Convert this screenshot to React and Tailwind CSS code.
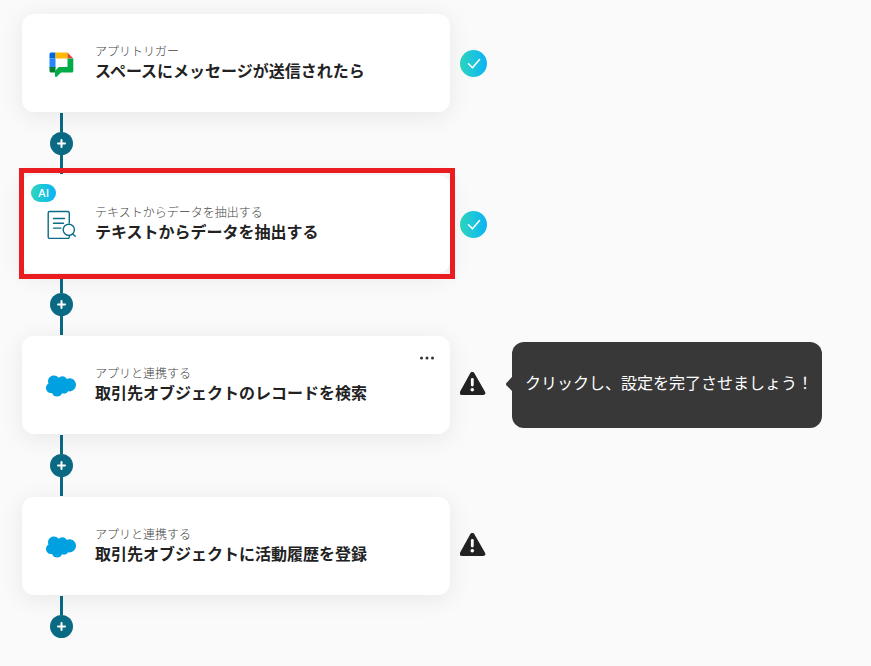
import React from 'react';
import clsx from 'clsx';

const steps = [
  { id: 1, icon: 'chat', label: 'アプリトリガー', title: 'スペースにメッセージが送信されたら', status: 'done' },
  { id: 2, icon: 'extract', label: 'テキストからデータを抽出する', title: 'テキストからデータを抽出する', status: 'done', ai: true, highlighted: true },
  { id: 3, icon: 'salesforce', label: 'アプリと連携する', title: '取引先オブジェクトのレコードを検索', status: 'warning', menu: true, hint: 'クリックし、設定を完了させましょう！' },
  { id: 4, icon: 'salesforce', label: 'アプリと連携する', title: '取引先オブジェクトに活動履歴を登録', status: 'warning' },
];

const ChatIcon = () => (
  <svg viewBox="0 0 30 30" className="size-[30px]" aria-hidden="true">
    <path d="M5 4.500h4.500v6h-6V6A1.500 1.500 0 0 1 5 4.500Z" fill="#0066DA" />
    <path d="M3.500 10.500h6V20h-6Z" fill="#2684FC" />
    <path d="M9.500 4.500h12v6h-12Z" fill="#FFBA00" />
    <path d="M21.500 4.500l5.800 6h-5.800Z" fill="#EA4335" />
    <path d="M3.500 19h6v5.500H5A1.500 1.500 0 0 1 3.500 23Z" fill="#00832D" />
    <path d="M21.500 10.500h5.800V23a1.500 1.500 0 0 1-1.500 1.500H15l-4 4c-.8.8-2 .4-2-.8V23l3.800-4h8.700Z" fill="#00AC47" />
  </svg>
);

const ExtractIcon = () => (
  <svg viewBox="0 0 30 30" className="size-[30px]" fill="none" stroke="#0B6C87" strokeWidth="1.400" strokeLinecap="round" aria-hidden="true">
    <path d="M23.300 14V4A1.500 1.500 0 0 0 21.800 2.500H3.700A1.500 1.500 0 0 0 2.200 4v24a1.500 1.500 0 0 0 1.500 1.500h18.100a1.500 1.500 0 0 0 1.500-1.500v-1.500" />
    <path d="M7.500 9.500h11M7.500 14.300h10M7.500 19.100h7.500" />
    <circle cx="22.800" cy="20.800" r="5.600" />
    <path d="M26.800 24.900l2.400 2.400" />
  </svg>
);

const SalesforceIcon = () => (
  <svg viewBox="0 -0.800 24 24" className="size-[30px]" fill="#00A1E0" aria-hidden="true">
    <path d="M10.006 5.415a4.195 4.195 0 0 1 3.045-1.306c1.560 0 2.954.9 3.690 2.205.63-.3 1.350-.45 2.100-.45 2.850 0 5.159 2.340 5.159 5.220s-2.310 5.220-5.176 5.220c-.345 0-.69-.044-1.020-.104a3.750 3.750 0 0 1-3.300 1.950c-.6 0-1.155-.15-1.650-.375A4.314 4.314 0 0 1 8.880 20.400a4.302 4.302 0 0 1-4.050-2.820c-.27.062-.54.076-.825.076-2.204 0-4.005-1.800-4.005-4.050 0-1.500.811-2.805 2.010-3.510-.255-.57-.39-1.200-.39-1.846 0-2.580 2.100-4.650 4.650-4.650 1.530 0 2.850.705 3.720 1.800" />
  </svg>
);

const icons = {
  chat: ChatIcon,
  extract: ExtractIcon,
  salesforce: SalesforceIcon,
};

const StatusMark = ({ status }) => {
  if (status === 'done') {
    return (
      <span
        role="img"
        aria-label="設定完了"
        className="flex size-[27px] shrink-0 items-center justify-center rounded-full bg-gradient-to-r from-[#2fd6bd] to-[#0fb2f5]"
      >
        <svg viewBox="0 0 27 27" className="size-full" fill="none" stroke="#fff" strokeWidth="1.600" strokeLinecap="round" strokeLinejoin="round">
          <path d="M8.500 13.800l4 4L19.500 9.600" />
        </svg>
      </span>
    );
  }
  return (
    <button type="button" aria-label="設定が未完了です" className="size-[27px] shrink-0">
      <svg viewBox="0 1 27 27" className="size-full">
        <path d="M10.200 2.200Q12.300-.8 14.400 2.200L25 20.800Q26.300 23.800 23 24H2Q-1.300 23.800 0 20.800Z" fill="#222" />
        <path d="M12.300 8.300v5.800" stroke="#fff" strokeWidth="2.800" strokeLinecap="round" />
        <circle cx="12.300" cy="18.800" r="1.800" fill="#fff" />
      </svg>
    </button>
  );
};

const Hint = ({ children }) => (
  <div role="tooltip" className="relative ml-[25px] flex h-[86px] items-center rounded-xl bg-[#383838] pr-2 pb-1.5 pl-[13px]">
    <svg viewBox="0 0 6 14" className="absolute top-[35px] -left-[6px] h-[14px] w-[6px]" fill="#383838" aria-hidden="true">
      <path d="M6 0v14L.4 8.200Q-.4 7 .4 6Z" />
    </svg>
    <p className="pr-px text-base whitespace-nowrap text-white">{children}</p>
  </div>
);

const StepCard = ({ step }) => {
  const Icon = icons[step.icon];

  return (
    <article className="relative flex h-[98px] max-w-[428px] flex-1 items-center gap-[19px] rounded-xl bg-white pl-6 shadow-[0_4px_24px_rgba(0,0,0,0.08)]">
      {step.ai && (
        <span className="absolute top-[9px] left-[9px] flex h-[18px] w-[25px] items-center justify-center rounded-full bg-gradient-to-r from-[#2fd6bd] to-[#0fb2f5] font-['Inter'] text-[11px] font-medium text-white">
          AI
        </span>
      )}
      <Icon />
      <div className="pb-1.5 whitespace-nowrap">
        <p className="text-xs leading-5 font-light text-[#444]">{step.label}</p>
        <h2 className="text-base leading-[18px] font-bold text-[#222]">{step.title}</h2>
      </div>
      {step.menu && (
        <button type="button" aria-label="メニュー" className="absolute top-[14px] right-[14px] h-4 w-[18px]">
          <svg viewBox="0 0 18 16" className="size-full" fill="#333">
            <circle cx="3.500" cy="8" r="1.500" />
            <circle cx="9" cy="8" r="1.500" />
            <circle cx="14.500" cy="8" r="1.500" />
          </svg>
        </button>
      )}
      {step.highlighted && (
        <div className="pointer-events-none absolute -top-[7px] -right-[5px] -bottom-[6px] -left-[3px] border-5 border-[#e91d1f]" />
      )}
    </article>
  );
};

const Connector = ({ last }) => (
  <div className="ml-7 flex w-[23px] flex-col items-center py-px">
    <span className="h-[19px] w-[3px] bg-[#0a6a83]" />
    <button
      type="button"
      aria-label="ステップを追加"
      className="flex size-[23px] items-center justify-center rounded-full bg-[#0a6a83]"
    >
      <svg viewBox="0 0 9 9" className="size-[9px]" stroke="#fff" strokeWidth="2" strokeLinecap="round">
        <path d="M4.500 1v7M1 4.500h7" />
      </svg>
    </button>
    <span className={clsx('w-[3px] bg-[#0a6a83]', last ? 'h-0' : 'h-[19px]')} />
  </div>
);

const App = () => {
  return (
    <main className="min-h-screen bg-[#fafafa] px-[22px] pt-[14px] pb-6 font-['Noto_Sans_CJK_JP',sans-serif]">
      <ol>
        {steps.map((step, index) => (
          <li key={step.id}>
            <div className="flex items-center">
              <StepCard step={step} />
              <div className="ml-[10px] flex items-center">
                <StatusMark status={step.status} />
                {step.hint && <Hint>{step.hint}</Hint>}
              </div>
            </div>
            <Connector last={index === steps.length - 1} />
          </li>
        ))}
      </ol>
    </main>
  );
};

export default App;
